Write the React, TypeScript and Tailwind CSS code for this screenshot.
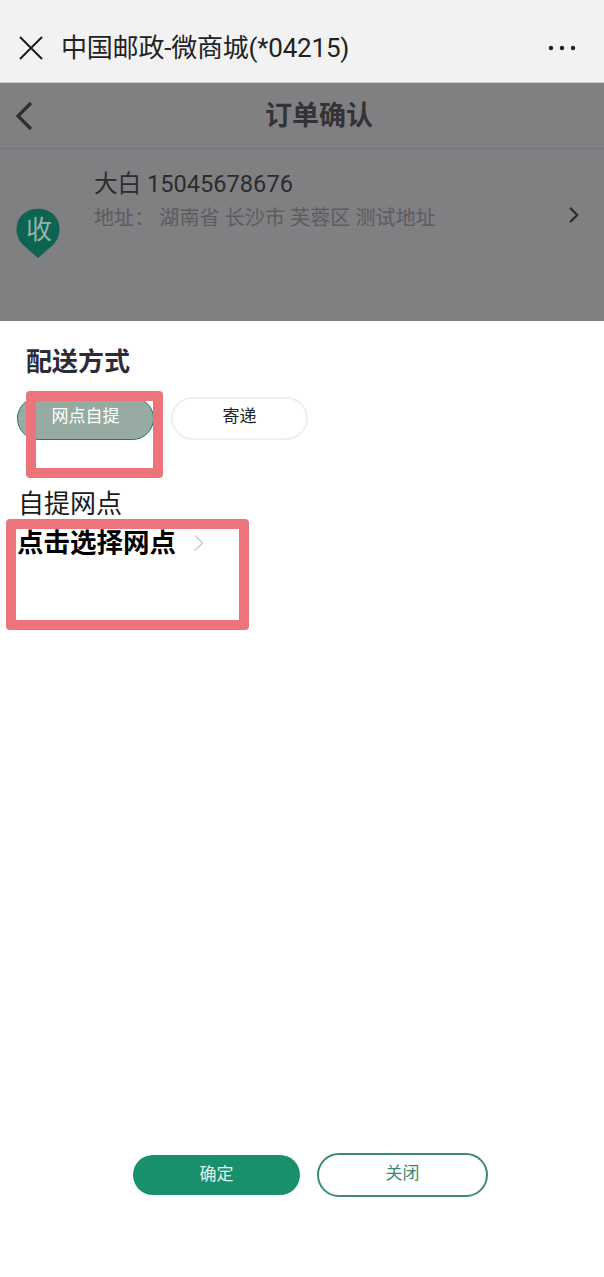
import { ChevronRight } from 'lucide-react';

const font = "font-['Roboto','Noto_Sans_CJK_SC',sans-serif]";

function TitleBar() {
  return (
    <div className="h-[83px] shrink-0 bg-[#f2f2f2] flex items-center pt-[13px] pl-[19px] pr-[28px] border-b border-[#c8c8c8]">
      <svg viewBox="0 0 24 24" className="w-[24px] h-[24px] text-[#1c1c1c]" fill="none" stroke="currentColor" strokeWidth="2">
        <path d="M1 1 L23 23 M23 1 L1 23" />
      </svg>
      <span className="ml-[18px] text-[26px] leading-[32px] text-[#222] flex-1 tracking-[-0.2px]">中国邮政-微商城(*04215)</span>
      <svg viewBox="0 0 28 6" className="w-[28px] h-[6px] text-[#222]" fill="currentColor">
        <circle cx="3" cy="3" r="2.2" />
        <circle cx="14" cy="3" r="2.2" />
        <circle cx="25" cy="3" r="2.2" />
      </svg>
    </div>
  );
}

function OrderBackdrop() {
  return (
    <div className="h-[238px] shrink-0 bg-[#807f82] flex flex-col">
      <div className="h-[66px] shrink-0 relative flex items-center justify-center border-b border-[#77767a]">
        <svg viewBox="0 0 18 30" className="absolute left-[15px] top-[18px] w-[18px] h-[30px] text-[#2f2f31]" fill="none" stroke="currentColor" strokeWidth="3.2">
          <path d="M16 2 L3 15 L16 28" />
        </svg>
        <span className="text-[27px] font-bold text-[#333336] leading-[34px] ml-[34px]">订单确认</span>
      </div>
      <div className="flex-1 flex pl-[16px] pr-[17px]">
        <div className="w-[44px] h-[52px] mt-[58px] shrink-0">
          <svg viewBox="0 0 44 52" className="w-[44px] h-[52px]">
            <path d="M22 51 L6 37 C-2 28 -1 14 7 7 C15 0 29 0 37 7 C45 14 46 28 38 37 Z" fill="#0f6352" />
            <text x="23" y="32" textAnchor="middle" fontSize="26" fill="#8fb5ab">收</text>
          </svg>
        </div>
        <div className="ml-[34px] flex-1">
          <div className="mt-[19px] text-[23.6px] leading-[32px] text-[#2c2c2e]">大白 15045678676</div>
          <div className="mt-[1px] text-[20px] tracking-[0.1px] leading-[34px] text-[#5d5c60] whitespace-pre">地址： 湖南省 长沙市 芙蓉区 测试地址</div>
        </div>
        <ChevronRight className="w-[26px] h-[30px] mt-[51px] text-[#2c2c2e]" strokeWidth={2.2} />
      </div>
    </div>
  );
}

function DeliverySheet() {
  return (
    <div className="flex-1 bg-white flex flex-col relative">
      <div className="pl-[26px] pt-[24px] text-[26px] leading-[34px] font-bold text-[#2c2c38]">配送方式</div>
      <div className="mt-[18px] pl-[17px] flex gap-[17px]">
        <div className="w-[137px] h-[43px] rounded-full bg-[#97aba3] border border-[#1d7a5f] text-white text-[17px] flex items-center justify-center pb-[4px]">网点自提</div>
        <div className="w-[137px] h-[43px] rounded-full bg-white border-2 border-[#efefef] text-[#222] text-[17px] flex items-center justify-center pb-[4px]">寄递</div>
      </div>
      <div className="mt-[46px] pl-[18px] text-[26px] leading-[36px] text-[#1a1a1a]">自提网点</div>
      <div className="pl-[17px] mt-[1px] flex items-center relative z-10">
        <span className="text-[26.5px] leading-[40px] font-bold text-black">点击选择网点</span>
        <ChevronRight className="ml-[9px] w-[28px] h-[30px] text-[#cfcfcf]" strokeWidth={1.4} />
      </div>

      <div className="mt-auto mb-[80px] flex items-center pl-[133px] gap-[17px]">
        <button className="w-[167px] h-[40px] rounded-full bg-[#18906b] text-[#e8f5f0] text-[17px] pb-[1px]">确定</button>
        <button className="w-[171px] h-[44px] rounded-full bg-white border-2 border-[#3c8a74] text-[#3c8a74] text-[17px] pb-[2px]">关闭</button>
      </div>

      {/* red annotation boxes drawn over the screenshot */}
      <div className="absolute left-[26px] top-[70px] w-[137px] h-[87px] rounded-[4px] border-[10px] border-[#ee747c]" />
      <div className="absolute left-[6px] top-[198px] w-[243px] h-[111px] rounded-[4px] border-[10px] border-[#ee747c]" />
    </div>
  );
}

export default function App() {
  return (
    <div className={`${font} w-[604px] h-[1277px] flex flex-col overflow-hidden bg-white`}>
      <TitleBar />
      <OrderBackdrop />
      <DeliverySheet />
    </div>
  );
}
